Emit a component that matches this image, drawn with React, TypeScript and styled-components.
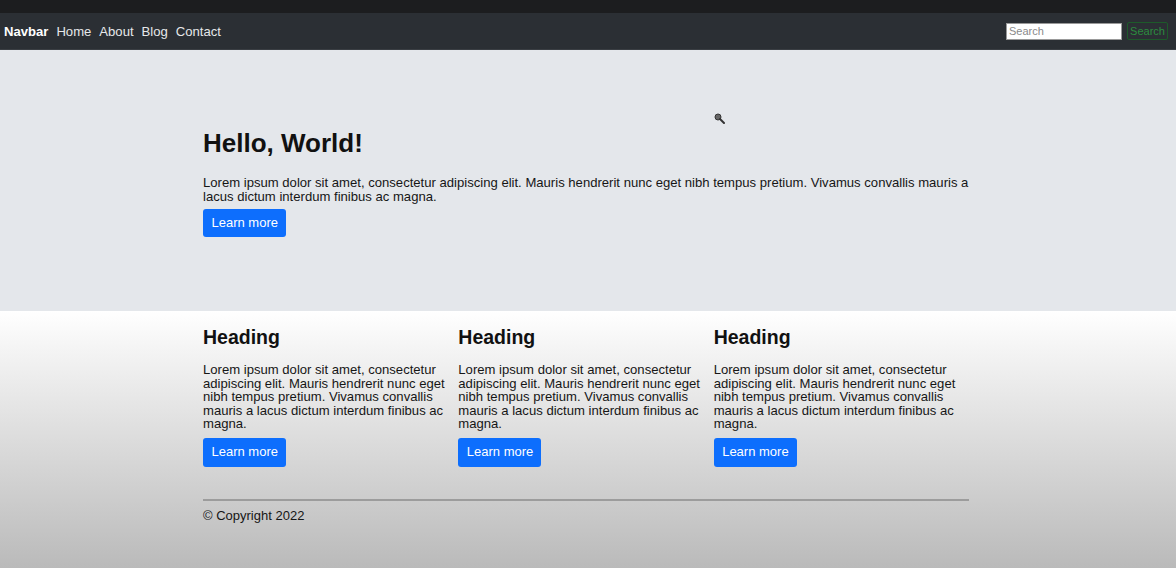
import React from "react";
import styled, { createGlobalStyle } from "styled-components";

const Global = createGlobalStyle`
  html, body { margin: 0; padding: 0; height: 100%; }
  body { font-family: "Liberation Sans", Arial, sans-serif; color: #111; background: #bbb; }
  #root { min-height: 100%; }
  * { box-sizing: border-box; }
`;

const Page = styled.div`
  display: flex;
  flex-direction: column;
  min-height: 568px;
`;

const TopStrip = styled.div`
  height: 13px;
  background: #1c1d1f;
`;

const Nav = styled.nav`
  height: 37px;
  background: #2b2f34;
  border-bottom: 1px solid #3a3e43;
  display: flex;
  align-items: center;
  padding: 0 8px 0 4px;
`;

const NavLinks = styled.div`
  display: flex;
  align-items: center;
  gap: 8px;
  flex: 1;
`;

const NavLink = styled.a<{ $brand?: boolean }>`
  color: ${(p) => (p.$brand ? "#fff" : "#e6e8ea")};
  font-size: 13.1px;
  font-weight: ${(p) => (p.$brand ? 700 : 400)};
  text-decoration: none;
`;

const SearchForm = styled.form`
  display: flex;
  align-items: center;
  gap: 5px;
  margin: 0;
`;

const SearchInput = styled.input`
  width: 116px;
  height: 17px;
  border: 1px solid #999;
  background: #fff;
  font-family: "Liberation Sans", Arial, sans-serif;
  font-size: 11px;
  padding: 0 2px;
  &::placeholder { color: #8a8a8a; }
`;

const OutlineButton = styled.button`
  height: 18px;
  width: 41px;
  padding: 0;
  border: 1px solid #1d5a2a;
  border-radius: 2px;
  background: transparent;
  color: #2b8c3f;
  font-family: "Liberation Sans", Arial, sans-serif;
  font-size: 11px;
`;

const Jumbotron = styled.section`
  position: relative;
  background: #e4e7eb;
  height: 261px;
  padding-top: 80px;
`;

const Container = styled.div`
  width: 766px;
  margin-left: 203px;
`;

const Title = styled.h1`
  margin: 0;
  font-size: 26px;
  font-weight: 700;
  line-height: 26px;
`;

const Text = styled.p`
  margin: 0;
  font-size: 13.1px;
  line-height: 13.5px;
  color: #161616;
`;

const Lead = styled(Text)`
  margin-top: 20px;
`;

const PrimaryButton = styled.a<{ $tall?: boolean }>`
  display: inline-block;
  margin-top: ${(p) => (p.$tall ? 7 : 6)}px;
  background: #0d6efd;
  color: #fff;
  font-size: 13px;
  line-height: 14px;
  padding: ${(p) => (p.$tall ? "7.5px" : "7px")} 8px;
  padding-left: 8.5px;
  border-radius: 3px;
  text-decoration: none;
`;

const Cursor = styled.svg`
  position: absolute;
  left: 714px;
  top: 63px;
`;

const Lower = styled.section`
  flex: 1;
  background: linear-gradient(#ffffff 0%, #f4f4f4 15%, #bababa 100%);
  padding-top: 16px;
`;

const Columns = styled.div`
  display: grid;
  grid-template-columns: repeat(3, 1fr);
  width: 766px;
`;

const Column = styled.div`
  padding-right: 12px;
`;

const ColTitle = styled.h2`
  margin: 0;
  font-size: 19.5px;
  line-height: 20px;
  font-weight: 700;
`;

const ColText = styled(Text)`
  margin-top: 16px;
`;

const Rule = styled.hr`
  margin: 32px 0 0;
  border: 0;
  height: 2px;
  background: #9c9c9c;
`;

const Footer = styled.footer`
  margin-top: 7px;
  font-size: 13px;
  color: #161616;
`;

const lorem =
  "Lorem ipsum dolor sit amet, consectetur adipiscing elit. Mauris hendrerit nunc eget nibh tempus pretium. Vivamus convallis mauris a lacus dictum interdum finibus ac magna.";

export default function App() {
  return (
    <Page>
      <Global />
      <TopStrip />
      <Nav>
        <NavLinks>
          <NavLink $brand href="#">Navbar</NavLink>
          <NavLink href="#">Home</NavLink>
          <NavLink href="#">About</NavLink>
          <NavLink href="#">Blog</NavLink>
          <NavLink href="#">Contact</NavLink>
        </NavLinks>
        <SearchForm onSubmit={(e) => e.preventDefault()}>
          <SearchInput placeholder="Search" />
          <OutlineButton type="submit">Search</OutlineButton>
        </SearchForm>
      </Nav>
      <Jumbotron>
        <Cursor width="11" height="11" viewBox="0 0 11 11">
          <circle cx="4" cy="4" r="3" fill="#666" stroke="#333" strokeWidth="1" />
          <line x1="6" y1="6" x2="10" y2="10" stroke="#333" strokeWidth="2" strokeLinecap="round" />
        </Cursor>
        <Container>
          <Title>Hello, World!</Title>
          <Lead>{lorem}</Lead>
          <PrimaryButton href="#">Learn more</PrimaryButton>
        </Container>
      </Jumbotron>
      <Lower>
        <Container>
          <Columns>
            {[0, 1, 2].map((i) => (
              <Column key={i}>
                <ColTitle>Heading</ColTitle>
                <ColText>{lorem}</ColText>
                <PrimaryButton $tall href="#">Learn more</PrimaryButton>
              </Column>
            ))}
          </Columns>
          <Rule />
          <Footer>© Copyright 2022</Footer>
        </Container>
      </Lower>
    </Page>
  );
}
